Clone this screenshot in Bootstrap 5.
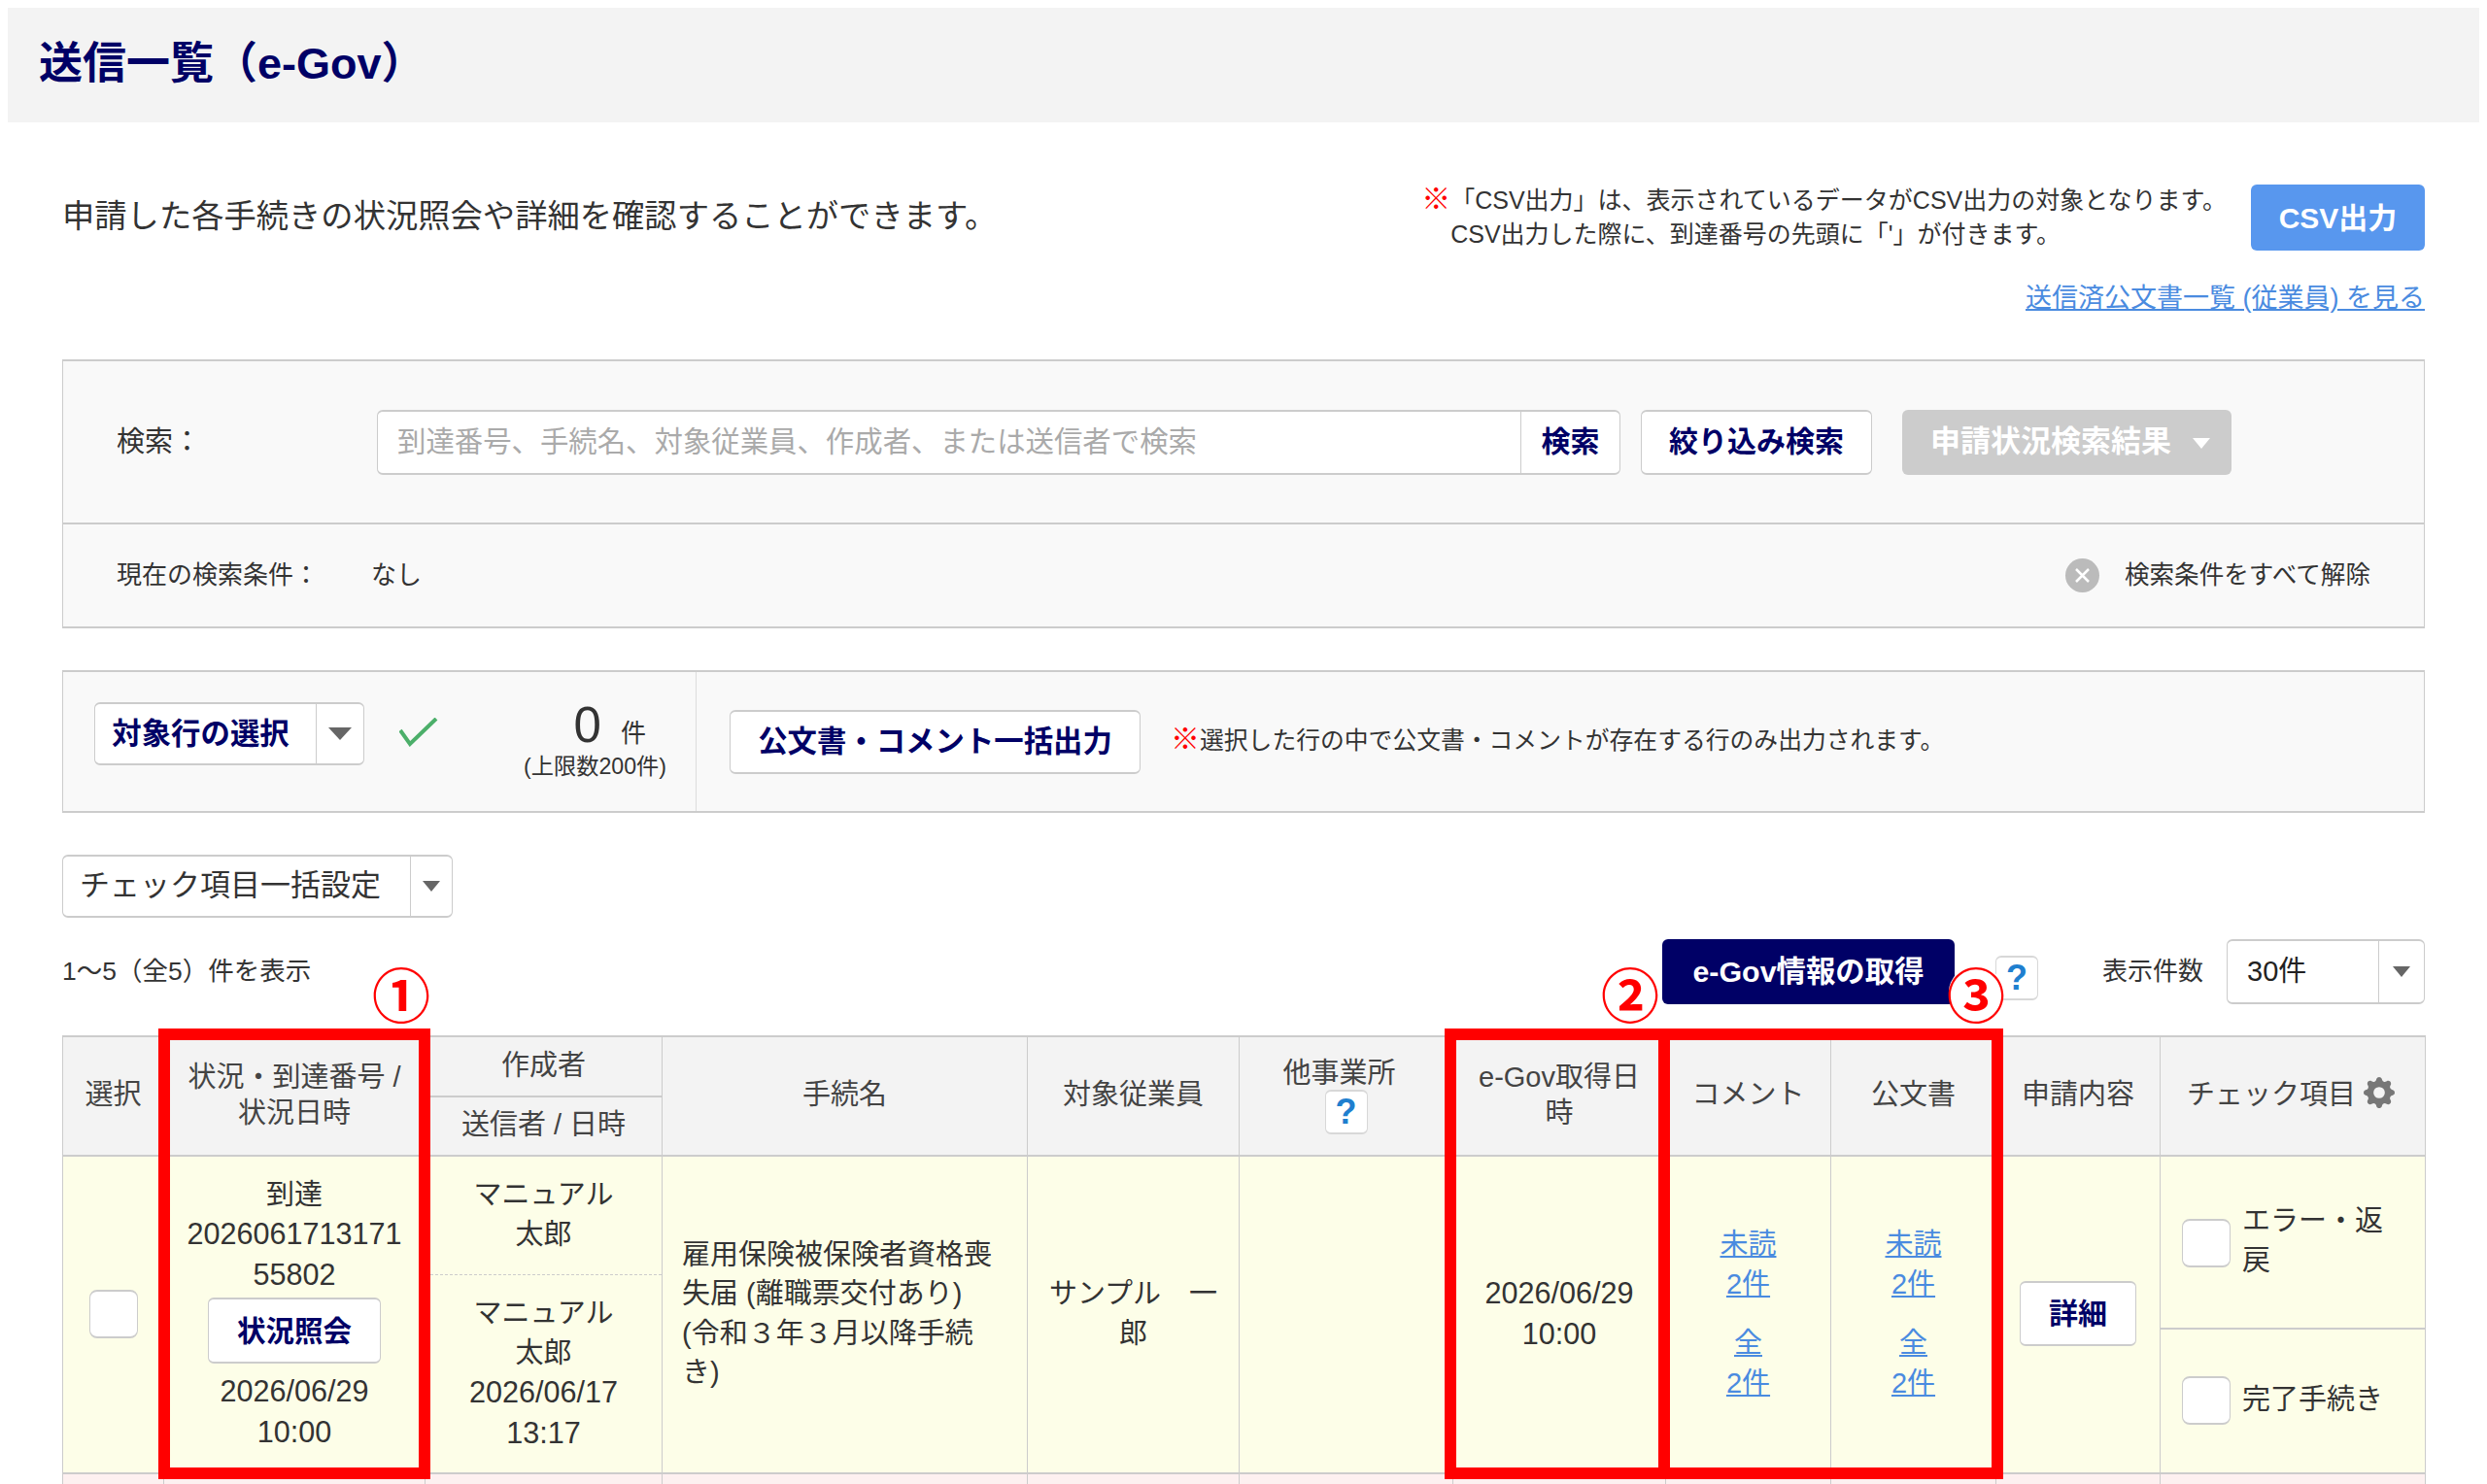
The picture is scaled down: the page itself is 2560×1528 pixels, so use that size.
<!DOCTYPE html>
<html lang="ja">
<head>
<meta charset="utf-8">
<title>送信一覧(e-Gov)</title>
<link href="https://cdn.jsdelivr.net/npm/bootstrap@5.3.0/dist/css/bootstrap.min.css" rel="stylesheet">
<style>
html,body{height:1528px;overflow:hidden;background:#fff}
body{font-family:"Liberation Sans","Noto Sans CJK JP",sans-serif;color:#333;font-size:29px;line-height:40.5px}
.title-band{margin:8px 8px 0;height:118px;background:#f3f3f3;padding-left:32px}
.title-band h1{font-size:45px;font-weight:700;color:#006;margin:0;line-height:1;margin-top:-4px}
.page-body{padding:0 64px}
.intro-row{margin-top:64px;height:68px}
.intro-text{font-size:33.3px;line-height:1;margin-top:-2px}
.note-text{font-size:25px;line-height:35px;margin-right:25px;white-space:nowrap}
.note-mark{color:#f00;font-weight:700;font-size:30px;line-height:1}
.note-second{padding-left:30px}
.btn-csv{width:179px;height:68px;background:#5897ee;border:0;border-radius:6px;color:#fff;font-weight:700;font-size:30px;padding:0}
.link-row{margin-top:31px;line-height:36px;font-size:27px}
.page-link-blue{color:#4a8be0}
.panel-box{background:#f9f9f9;border:solid #ccc;border-width:2px 1px}
.search-panel{margin-top:45px}
.search-top{height:168px;padding-left:55px;border-bottom:2px solid #ccc}
.search-label{width:268px;font-size:29px}
.search-group{width:1280px;height:67px}
.search-group .form-control{font-size:29.4px;padding:0 20px;border:solid #ccc;border-width:2px 1px;border-radius:6px 0 0 6px;box-shadow:none;height:67px}
.search-group .form-control::placeholder{color:#aaa}
.btn-plain{background:#fff;border:solid #ccc;border-width:2px 1px;border-radius:6px;color:#006;font-weight:700;font-size:30px;padding:0;line-height:1}
.btn-plain:hover{background:#fff;color:#006;border-color:#ccc}
.search-group .btn-plain{width:103px;border-radius:0 6px 6px 0}
.btn-narrow{width:238px;height:67px;margin-left:21px}
.btn-off{width:339px;height:67px;margin-left:31px;background:#ccc;border:0;border-radius:6px;color:#fff;font-weight:700;font-size:31px;padding:0 0 0 7px;opacity:1}
.btn-off:disabled{background:#ccc;color:#fff;opacity:1}
.tri{display:inline-block;width:0;height:0;border-style:solid;border-width:11px 9.5px 0;border-color:#666 transparent transparent}
.tri-big{border-width:13px 12px 0}
.tri-white{border-top-color:#fff;margin-left:22px;vertical-align:middle}
.cond-row{height:105px;padding:0 55px;font-size:26px}
.cond-label{width:262px}
.clear-x{width:35px;height:35px;border-radius:50%;background:#bbb;margin-right:18px}
.clear-text{font-size:25.6px}
.bulk-panel{margin-top:43px;height:147px}
.bulk-left{width:652px;border-right:1px solid #ddd;padding-left:32px;padding-top:31px;position:relative}
.split-drop{display:flex;background:#fff;border:solid #ccc;border-width:2px 1px;border-radius:6px;align-items:stretch;padding:0}
.split-drop .split-text{display:flex;align-items:center;justify-content:center}
.split-drop .split-arrow{display:flex;align-items:center;justify-content:center;border-left:1px solid #ccc;flex:1}
.drop-target{width:278px;height:65px;color:#006;font-weight:700;font-size:30.4px}
.drop-target .split-text{width:227px;padding-right:10px}
.check-mark{margin-left:36px;margin-top:16px}
.count-box{position:absolute;left:473px;top:26px;width:148px;text-align:right;white-space:nowrap}
.count-num{font-size:51px;line-height:58px;margin-right:20px}
.count-unit{font-size:26px;margin-right:21px}
.count-limit{font-size:23.2px;line-height:26px}
.bulk-right{padding-left:34px}
.btn-bulk{width:423px;height:66px;font-size:30.4px}
.bulk-note{font-size:24.8px;margin-left:31px;white-space:nowrap}
.drop-check{margin-top:43px;width:402px;height:65px;color:#333;font-size:31px;font-weight:400}
.drop-check .split-text{width:357px;justify-content:flex-start;padding-left:17px}
.tool-row{margin-top:22px;height:67px}
.count-text{font-size:26.5px}
.btn-navy{width:301px;height:67px;background:#006;border:0;border-radius:6px;color:#fff;font-weight:700;font-size:30.4px;padding:0;margin-left:auto}
.btn-help{width:44px;height:46px;background:#fff;border:solid #d8d8d8;border-width:2px 1px;border-radius:6px;color:#1f7fcf;font-weight:700;font-size:36px;line-height:1;padding:0;display:flex;align-items:center;justify-content:center}
.help-top{margin-left:42px;margin-top:13px}
.show-label{font-size:26px;margin-left:66px;margin-right:24px}
.drop-show{width:204px;height:67px;color:#222;font-size:29px;font-weight:400}
.drop-show .split-text{width:155px;justify-content:flex-start;padding-left:20px}
.table-area{position:relative;margin-top:32px}
.send-table{table-layout:fixed;width:2432px;border-collapse:collapse;text-align:center}
.send-table th,.send-table td{border:1px solid #ccc;padding:0 0 2px;vertical-align:middle}
.send-table th{background:#f3f3f3;font-weight:400;color:#444;line-height:37px;border-top-width:2px;border-bottom-width:2px}
.send-table .sub-top{height:62px;border-bottom-width:2px}
.send-table .sub-bottom{height:61px;border-top-width:2px}
.send-table tbody .row-main td{background:#fdfee8;height:327px;border-bottom-width:2px}
.send-table tbody .row-next td{background:#fdf0f0;height:11px;padding:0}
.send-table .stack-td{padding:0}
.send-table .office-th{padding-bottom:0}
.office-label{margin:-2px 14px -2px 0;display:block}
.send-table .check-th{padding-right:4px}
.digit-text{font-size:30.6px}
.cb-box.form-check-input{width:50px;height:50px;margin:0;background-color:#fff;border:solid #ccc;border-width:2px 1px;border-radius:8px;flex:none}
.btn-status{width:178px;height:68px;display:block;margin:3px auto 8px;font-size:29.5px}
.stack-cell{height:100%;display:flex;flex-direction:column}
.sender-a{height:122px;padding-top:19px;border-bottom:1px dashed #ccc}
.sender-b{flex:1;padding-top:19px}
.send-table .proc-cell{text-align:left;padding:0 20px 2px}
.send-table .emp-cell{padding:0 10px 2px}
.link-cell a{color:#4a8be0;display:block}
.link-gap{margin-top:21px}
.btn-detail{width:120px;height:67px}
.check-a{height:178px;border-bottom:2px solid #ccc;padding:46px 20px 0 22px;display:flex;gap:12px;text-align:left}
.check-a .cb-box{margin-top:18px}
.check-b{flex:1;display:flex;align-items:center;gap:12px;padding:0 22px 2px;text-align:left}
.gear-icon{vertical-align:-4px;margin-left:8px}
.red-frame{position:absolute;border:12px solid #f00;pointer-events:none}
.frame-one{left:99px;top:-7px;width:280px;height:464px}
.frame-two{left:1423px;top:-7px;width:232px;height:464px}
.frame-three{left:1643px;top:-7px;width:355px;height:464px}
.circle-num{position:absolute;top:-72px;width:56px;height:56px;border-radius:50%;background:#fff;color:#f00;font-family:"Noto Sans CJK JP",sans-serif;font-weight:700;font-size:60px;line-height:56px;text-align:center;display:flex;align-items:center;justify-content:center}
.num-one{left:321px}
.num-two{left:1586px}
.num-three{left:1942px}
</style>
</head>
<body>
<header class="title-band d-flex align-items-center"><h1>送信一覧&#xFF08;e-Gov&#xFF09;</h1></header>
<main class="page-body">
  <div class="intro-row d-flex justify-content-between align-items-center">
    <p class="intro-text mb-0">申請した各手続きの状況照会や詳細を確認することができます。</p>
    <div class="d-flex align-items-center">
      <div class="note-text">
        <div><span class="note-mark">※</span>「CSV出力」は、表示されているデータがCSV出力の対象となります。</div>
        <div class="note-second">CSV出力した際に、到達番号の先頭に「'」が付きます。</div>
      </div>
      <button type="button" class="btn btn-csv">CSV出力</button>
    </div>
  </div>
  <div class="link-row text-end"><a href="#" class="page-link-blue">送信済公文書一覧 (従業員) を見る</a></div>

  <section class="panel-box search-panel">
    <div class="search-top d-flex align-items-center">
      <div class="search-label">検索&#xFF1A;</div>
      <div class="input-group search-group">
        <input type="text" class="form-control" placeholder="到達番号、手続名、対象従業員、作成者、または送信者で検索">
        <button type="button" class="btn btn-plain">検索</button>
      </div>
      <button type="button" class="btn btn-plain btn-narrow">絞り込み検索</button>
      <button type="button" class="btn btn-off" disabled>申請状況検索結果<span class="tri tri-white"></span></button>
    </div>
    <div class="cond-row d-flex align-items-center">
      <div class="cond-label">現在の検索条件&#xFF1A;</div>
      <div>なし</div>
      <div class="ms-auto d-flex align-items-center">
        <svg class="clear-x" viewBox="0 0 35 35" width="35" height="35"><path d="M11 11l13 13M24 11L11 24" stroke="#fff" stroke-width="2.5" fill="none"/></svg>
        <span class="ms-2 clear-text">検索条件をすべて解除</span>
      </div>
    </div>
  </section>

  <section class="panel-box bulk-panel d-flex">
    <div class="bulk-left d-flex align-items-start">
      <button type="button" class="btn split-drop drop-target"><span class="split-text">対象行の選択</span><span class="split-arrow"><span class="tri tri-big"></span></span></button>
      <svg class="check-mark" width="40" height="30" viewBox="0 0 40 30"><path d="M1 13L11 27L38 1" stroke="#4caf6a" stroke-width="4" fill="none"/></svg>
      <div class="count-box">
        <div><span class="count-num">0</span><span class="count-unit">件</span></div>
        <div class="count-limit">(上限数200件)</div>
      </div>
    </div>
    <div class="bulk-right d-flex align-items-center">
      <button type="button" class="btn btn-plain btn-bulk">公文書・コメント一括出力</button>
      <div class="bulk-note"><span class="note-mark">※</span>選択した行の中で公文書・コメントが存在する行のみ出力されます。</div>
    </div>
  </section>

  <button type="button" class="btn split-drop drop-check"><span class="split-text">チェック項目一括設定</span><span class="split-arrow"><span class="tri"></span></span></button>

  <div class="tool-row d-flex align-items-center">
    <div class="count-text">1&#xFF5E;5&#xFF08;全5&#xFF09;件を表示</div>
    <button type="button" class="btn btn-navy">e-Gov情報の取得</button>
    <button type="button" class="btn btn-help help-top">?</button>
    <div class="show-label">表示件数</div>
    <button type="button" class="btn split-drop drop-show"><span class="split-text">30件</span><span class="split-arrow"><span class="tri"></span></span></button>
  </div>

  <div class="table-area">
    <table class="send-table">
      <colgroup><col style="width:104px"><col style="width:269px"><col style="width:244px"><col style="width:376px"><col style="width:218px"><col style="width:220px"><col style="width:219px"><col style="width:170px"><col style="width:170px"><col style="width:169px"><col style="width:273px"></colgroup>
      <thead>
        <tr>
          <th rowspan="2">選択</th>
          <th rowspan="2">状況・到達番号 /<br>状況日時</th>
          <th class="sub-top">作成者</th>
          <th rowspan="2">手続名</th>
          <th rowspan="2">対象従業員</th>
          <th rowspan="2" class="office-th"><span class="office-label">他事業所</span><button type="button" class="btn btn-help mx-auto">?</button></th>
          <th rowspan="2">e-Gov取得日<br>時</th>
          <th rowspan="2">コメント</th>
          <th rowspan="2">公文書</th>
          <th rowspan="2">申請内容</th>
          <th rowspan="2" class="check-th">チェック項目<svg class="gear-icon" width="32" height="32" viewBox="0 0 16 16" fill="#777"><path d="M9.405 1.05c-.413-1.4-2.397-1.4-2.81 0l-.1.34a1.464 1.464 0 0 1-2.105.872l-.31-.17c-1.283-.698-2.686.705-1.987 1.987l.169.311c.446.82.023 1.841-.872 2.105l-.34.1c-1.4.413-1.4 2.397 0 2.81l.34.1a1.464 1.464 0 0 1 .872 2.105l-.17.31c-.698 1.283.705 2.686 1.987 1.987l.311-.169a1.464 1.464 0 0 1 2.105.872l.1.34c.413 1.4 2.397 1.4 2.81 0l.1-.34a1.464 1.464 0 0 1 2.105-.872l.31.17c1.283.698 2.686-.705 1.987-1.987l-.169-.311a1.464 1.464 0 0 1 .872-2.105l.34-.1c1.4-.413 1.4-2.397 0-2.81l-.34-.1a1.464 1.464 0 0 1-.872-2.105l.17-.31c.698-1.283-.705-2.686-1.987-1.987l-.311.169a1.464 1.464 0 0 1-2.105-.872l-.1-.34zM8 10.93a2.929 2.929 0 1 1 0-5.86 2.929 2.929 0 0 1 0 5.858z"/></svg></th>
        </tr>
        <tr><th class="sub-bottom">送信者 / 日時</th></tr>
      </thead>
      <tbody>
        <tr class="row-main">
          <td><input type="checkbox" class="form-check-input cb-box" aria-label="選択"></td>
          <td>到達<br><span class="digit-text">2026061713171<br>55802</span><button type="button" class="btn btn-plain btn-status">状況照会</button><span class="digit-text">2026/06/29<br>10:00</span></td>
          <td class="stack-td">
            <div class="stack-cell">
              <div class="sender-a">マニュアル<br>太郎</div>
              <div class="sender-b">マニュアル<br>太郎<br><span class="digit-text">2026/06/17<br>13:17</span></div>
            </div>
          </td>
          <td class="proc-cell">雇用保険被保険者資格喪<br>失届 (離職票交付あり)<br>(令和&#xFF13;年&#xFF13;月以降手続<br>き)</td>
          <td class="emp-cell">サンプル&#x3000;一<br>郎</td>
          <td></td>
          <td><span class="digit-text">2026/06/29<br>10:00</span></td>
          <td class="link-cell"><a href="#">未読<br>2件</a><a href="#" class="link-gap">全<br>2件</a></td>
          <td class="link-cell"><a href="#">未読<br>2件</a><a href="#" class="link-gap">全<br>2件</a></td>
          <td><button type="button" class="btn btn-plain btn-detail">詳細</button></td>
          <td class="stack-td">
            <div class="stack-cell">
              <label class="check-a"><input type="checkbox" class="form-check-input cb-box"><span>エラー・返戻</span></label>
              <label class="check-b"><input type="checkbox" class="form-check-input cb-box"><span>完了手続き</span></label>
            </div>
          </td>
        </tr>
        <tr class="row-next"><td></td><td></td><td></td><td></td><td></td><td></td><td></td><td></td><td></td><td></td><td></td></tr>
      </tbody>
    </table>
    <div class="red-frame frame-one"></div>
    <div class="red-frame frame-two"></div>
    <div class="red-frame frame-three"></div>
    <div class="circle-num num-one">①</div>
    <div class="circle-num num-two">②</div>
    <div class="circle-num num-three">③</div>
  </div>
</main>
</body>
</html>
